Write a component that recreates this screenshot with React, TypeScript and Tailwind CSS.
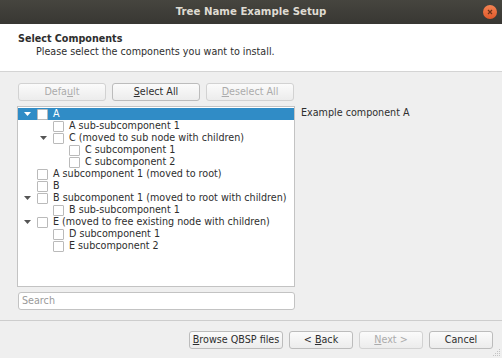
import React from 'react';

type Node = { label: string; level: number; arrow?: boolean; selected?: boolean };

const rows: Node[] = [
  { label: 'A', level: 0, arrow: true, selected: true },
  { label: 'A sub-subcomponent 1', level: 1 },
  { label: 'C (moved to sub node with children)', level: 1, arrow: true },
  { label: 'C subcomponent 1', level: 2 },
  { label: 'C subcomponent 2', level: 2 },
  { label: 'A subcomponent 1 (moved to root)', level: 0 },
  { label: 'B', level: 0 },
  { label: 'B subcomponent 1 (moved to root with children)', level: 0, arrow: true },
  { label: 'B sub-subcomponent 1', level: 1 },
  { label: 'E (moved to free existing node with children)', level: 0, arrow: true },
  { label: 'D subcomponent 1', level: 1 },
  { label: 'E subcomponent 2', level: 1 },
];

const indent = ['pl-[19px]', 'pl-[35px]', 'pl-[51px]'];

function Btn({ children, disabled, w }: { children: React.ReactNode; disabled?: boolean; w: string }) {
  return (
    <div
      className={`${w} h-[18px] flex items-center justify-center rounded-[3px] border bg-gradient-to-b from-[#fbfbfb] to-[#ececec] text-[9.6px] whitespace-nowrap ${
        disabled ? 'text-[#ababab] border-[#d2d2d2]' : 'text-[#2e2e2e] border-[#bcbcbc]'
      }`}
    >
      {children}
    </div>
  );
}

function Row({ n }: { n: Node }) {
  return (
    <div
      className={`h-[12px] flex items-center ${indent[n.level]} relative ${
        n.selected ? 'bg-[#308cc6] text-white' : 'text-[#2e2e2e]'
      }`}
    >
      {n.arrow && (
        <svg
          className="absolute top-[4px]"
          style={{ left: 6 + n.level * 16 }}
          width="7"
          height="4"
          viewBox="0 0 7 4"
        >
          <path d="M0 0 H7 L3.5 4 Z" fill={n.selected ? '#ffffff' : '#555555'} />
        </svg>
      )}
      <div className="w-[11px] h-[11px] border border-[#bababa] bg-white rounded-[1px] shrink-0" />
      <span className="ml-[5px] leading-none whitespace-nowrap">{n.label}</span>
    </div>
  );
}

export default function App() {
  return (
    <div
      className="w-[502px] h-[358px] flex flex-col bg-[#efefef] overflow-hidden"
      style={{ fontFamily: '"DejaVu Sans", sans-serif' }}
    >
      <div className="h-[24px] shrink-0 flex items-center justify-center relative bg-gradient-to-b from-[#46453f] to-[#383733]">
        <span className="text-[10.2px] font-bold text-[#dfdbd2]">Tree Name Example Setup</span>
        <div className="absolute right-[5px] top-[5px] w-[14px] h-[14px] rounded-full bg-gradient-to-b from-[#f58352] to-[#e0582a] flex items-center justify-center">
          <svg width="6" height="6" viewBox="0 0 6 6">
            <path d="M1 1 L5 5 M5 1 L1 5" stroke="#6a3119" strokeWidth="1.2" />
          </svg>
        </div>
      </div>

      <div className="h-[48px] shrink-0 bg-white border-b border-[#d4d4d4] pl-[18px] pt-[8px] text-[#2e2e2e]">
        <div className="text-[9.6px] font-bold leading-[13px]">Select Components</div>
        <div className="text-[9.6px] leading-[13px] pl-[18px]">Please select the components you want to install.</div>
      </div>

      <div className="flex-1 flex flex-col pl-[17px] pt-[11px]">
        <div className="flex gap-[6px] pl-[1px]">
          <Btn w="w-[88px]" disabled>
            <span>
              Defa<span className="underline">u</span>lt
            </span>
          </Btn>
          <Btn w="w-[88px]">
            <span>
              <span className="underline">S</span>elect All
            </span>
          </Btn>
          <Btn w="w-[88px]" disabled>
            <span>
              <span className="underline">D</span>eselect All
            </span>
          </Btn>
        </div>

        <div className="flex mt-[5px]">
          <div className="w-[278px] h-[181px] border border-[#c3c3c3] bg-white pt-[1px] text-[9.6px]">
            {rows.map((n) => (
              <Row key={n.label} n={n} />
            ))}
          </div>
          <div className="pl-[6px] pt-[1px] text-[9.6px] text-[#2e2e2e] leading-[12px]">Example component A</div>
        </div>

        <div className="w-[277px] h-[18px] mt-[5px] ml-[1px] border border-[#c3c3c3] rounded-[3px] bg-white flex items-center pl-[3px] text-[9.6px] text-[#9a9a9a]">
          Search
        </div>
      </div>

      <div className="shrink-0 border-t border-[#cdcdcd] h-[38px] flex items-start justify-end gap-[6px] pr-[9px] pt-[10px] relative">
        <Btn w="w-[94px]">
          <span>
            <span className="underline">B</span>rowse QBSP files
          </span>
        </Btn>
        <Btn w="w-[64px]">
          <span>
            &lt; <span className="underline">B</span>ack
          </span>
        </Btn>
        <Btn w="w-[64px]" disabled>
          <span>
            <span className="underline">N</span>ext &gt;
          </span>
        </Btn>
        <Btn w="w-[64px]">Cancel</Btn>
        <svg className="absolute right-[1px] bottom-[1px]" width="8" height="8" viewBox="0 0 8 8">
          <g fill="#c4c4c4">
            <rect x="6" y="0" width="1" height="1" />
            <rect x="4" y="2" width="1" height="1" />
            <rect x="6" y="2" width="1" height="1" />
            <rect x="2" y="4" width="1" height="1" />
            <rect x="4" y="4" width="1" height="1" />
            <rect x="6" y="4" width="1" height="1" />
            <rect x="0" y="6" width="1" height="1" />
            <rect x="2" y="6" width="1" height="1" />
            <rect x="4" y="6" width="1" height="1" />
            <rect x="6" y="6" width="1" height="1" />
          </g>
        </svg>
      </div>
    </div>
  );
}
